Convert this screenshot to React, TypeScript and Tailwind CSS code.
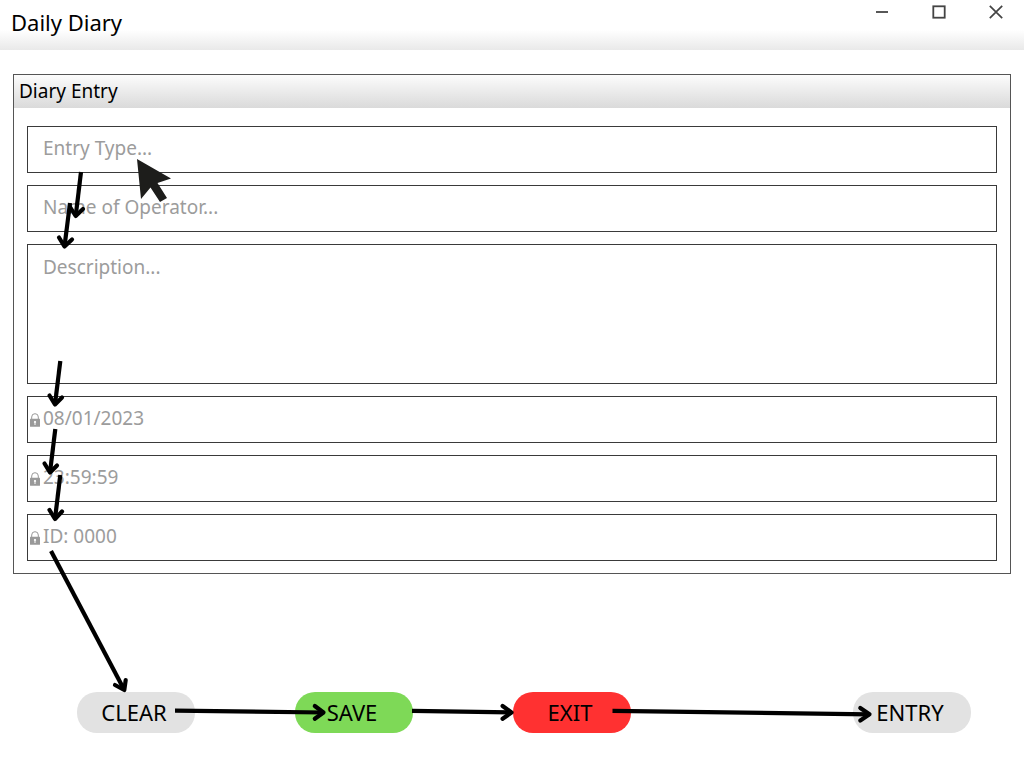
import React from "react";

const FIELD =
  "block w-full border border-[#3a3a3a] bg-transparent pr-4 pl-[15px] text-[19px] leading-6 text-[#9c9c9c] placeholder:text-[#9c9c9c] placeholder:opacity-100 outline-none";

function LockIcon() {
  return (
    <svg
      aria-hidden="true"
      viewBox="0 0 10 14"
      className="absolute bottom-4 left-[3px] h-[14px] w-[10px]"
    >
      <path d="M1.7 6V4a3.3 3.3 0 0 1 6.6 0v2" fill="none" stroke="#999" strokeWidth="1" />
      <rect y="5.8" width="10" height="8" rx="0.5" fill="#999" />
      <path d="M4.5 10a1.1 1.1 0 1 1 1 0v2h-1z" fill="#fff" />
    </svg>
  );
}

function LockedField({ label, value }: { label: string; value: string }) {
  return (
    <div className="relative">
      <LockIcon />
      <input aria-label={label} readOnly value={value} className={`${FIELD} h-[47px] pb-[3px]`} />
    </div>
  );
}

type Point = [number, number];

const ARROWS: { from: Point; tip: Point; wings: [Point, Point] }[] = [
  { from: [81, 172], tip: [75.7, 216], wings: [[70, 207], [83, 209]] },
  { from: [70, 203], tip: [64.5, 246.5], wings: [[59, 237.5], [72, 239.5]] },
  { from: [60.3, 361], tip: [55, 404.5], wings: [[49.5, 395.5], [62, 397.5]] },
  { from: [55.3, 429], tip: [50, 472.5], wings: [[44.5, 463.5], [57, 465.5]] },
  { from: [60.3, 475], tip: [55, 519], wings: [[49.5, 510], [62, 511.5]] },
  { from: [51, 551], tip: [124.3, 690], wings: [[115, 685], [125.7, 680]] },
  { from: [175, 710.7], tip: [323.5, 712.5], wings: [[314.8, 706], [314.8, 718.8]] },
  { from: [412, 710.8], tip: [511.5, 712.5], wings: [[502.6, 706], [502.6, 718.8]] },
  { from: [612.5, 710.8], tip: [869.5, 714.3], wings: [[860.3, 708], [860.3, 720.5]] },
];

function FlowArrows() {
  return (
    <svg
      aria-hidden="true"
      width="1024"
      height="768"
      viewBox="0 0 1024 768"
      className="pointer-events-none absolute top-0 left-0"
    >
      <g fill="none" stroke="#000" strokeWidth="4.2">
        {ARROWS.map(({ from, tip, wings }) => (
          <g key={from.join()}>
            <path d={`M${from}L${tip}`} />
            <path
              d={`M${wings[0]}L${tip}L${wings[1]}`}
              strokeLinecap="round"
              strokeLinejoin="round"
            />
          </g>
        ))}
      </g>
      <path
        d="M137 159 171 178.5 157.5 183 167 198 160 202 150.5 187.5 141 199Z"
        fill="#1d1d1b"
      />
    </svg>
  );
}

const BUTTON =
  "h-[41px] w-[118px] rounded-[20px] pr-1 pb-[2px] text-center text-[22px] leading-6 text-black";
const WINDOW_BUTTON = "flex h-6 w-[57px] items-center justify-center";

export default function App() {
  return (
    <div className="relative min-h-screen overflow-x-hidden bg-white font-['Noto_Sans',sans-serif] text-black">
      <header className="flex h-[50px] items-start justify-between bg-linear-to-b from-white from-60% to-[#e9e9e9] pl-[11px]">
        <h1 className="pt-2 text-[22px] leading-7">Daily Diary</h1>
        <div className="flex">
          <button aria-label="Minimize" className={WINDOW_BUTTON}>
            <svg width="14" height="14" viewBox="0 0 14 14" stroke="#444" strokeWidth="1.8">
              <path d="M1 7h12" />
            </svg>
          </button>
          <button aria-label="Maximize" className={WINDOW_BUTTON}>
            <svg width="14" height="14" viewBox="0 0 14 14" fill="none" stroke="#444" strokeWidth="1.8">
              <rect x="1.3" y="1.3" width="11.4" height="11.4" />
            </svg>
          </button>
          <button aria-label="Close" className={WINDOW_BUTTON}>
            <svg width="14" height="14" viewBox="0 0 14 14" stroke="#444" strokeWidth="1.7">
              <path d="M0.8 0.8l12.4 12.4M13.2 0.8L0.8 13.2" />
            </svg>
          </button>
        </div>
      </header>

      <main className="px-[13px] pt-6">
        <section className="border border-[#555]">
          <h2 className="h-[33px] bg-linear-to-b from-[#fcfcfc] to-[#dadada] pt-1 pl-[5px] text-[19px] leading-6">
            Diary Entry
          </h2>
          <form className="flex flex-col gap-3 px-[13px] pt-[18px] pb-3">
            <input
              aria-label="Entry type"
              placeholder="Entry Type..."
              className={`${FIELD} h-[47px] pb-[3px]`}
            />
            <input
              aria-label="Name of operator"
              placeholder="Name of Operator..."
              className={`${FIELD} h-[47px] pb-[3px]`}
            />
            <textarea
              aria-label="Description"
              placeholder="Description..."
              className={`${FIELD} h-[140px] resize-none pt-[10px]`}
            />
            <LockedField label="Date" value="08/01/2023" />
            <LockedField label="Time" value="23:59:59" />
            <LockedField label="Entry ID" value="ID: 0000" />
          </form>
        </section>

        <div className="mt-[118px] flex gap-[100px] pr-10 pl-16">
          <button className={`${BUTTON} bg-[#e2e2e2]`}>CLEAR</button>
          <button className={`${BUTTON} bg-[#7ed957]`}>SAVE</button>
          <button className={`${BUTTON} bg-[#ff3131]`}>EXIT</button>
          <button className={`${BUTTON} ml-auto bg-[#e2e2e2]`}>ENTRY</button>
        </div>
      </main>

      <FlowArrows />
    </div>
  );
}
